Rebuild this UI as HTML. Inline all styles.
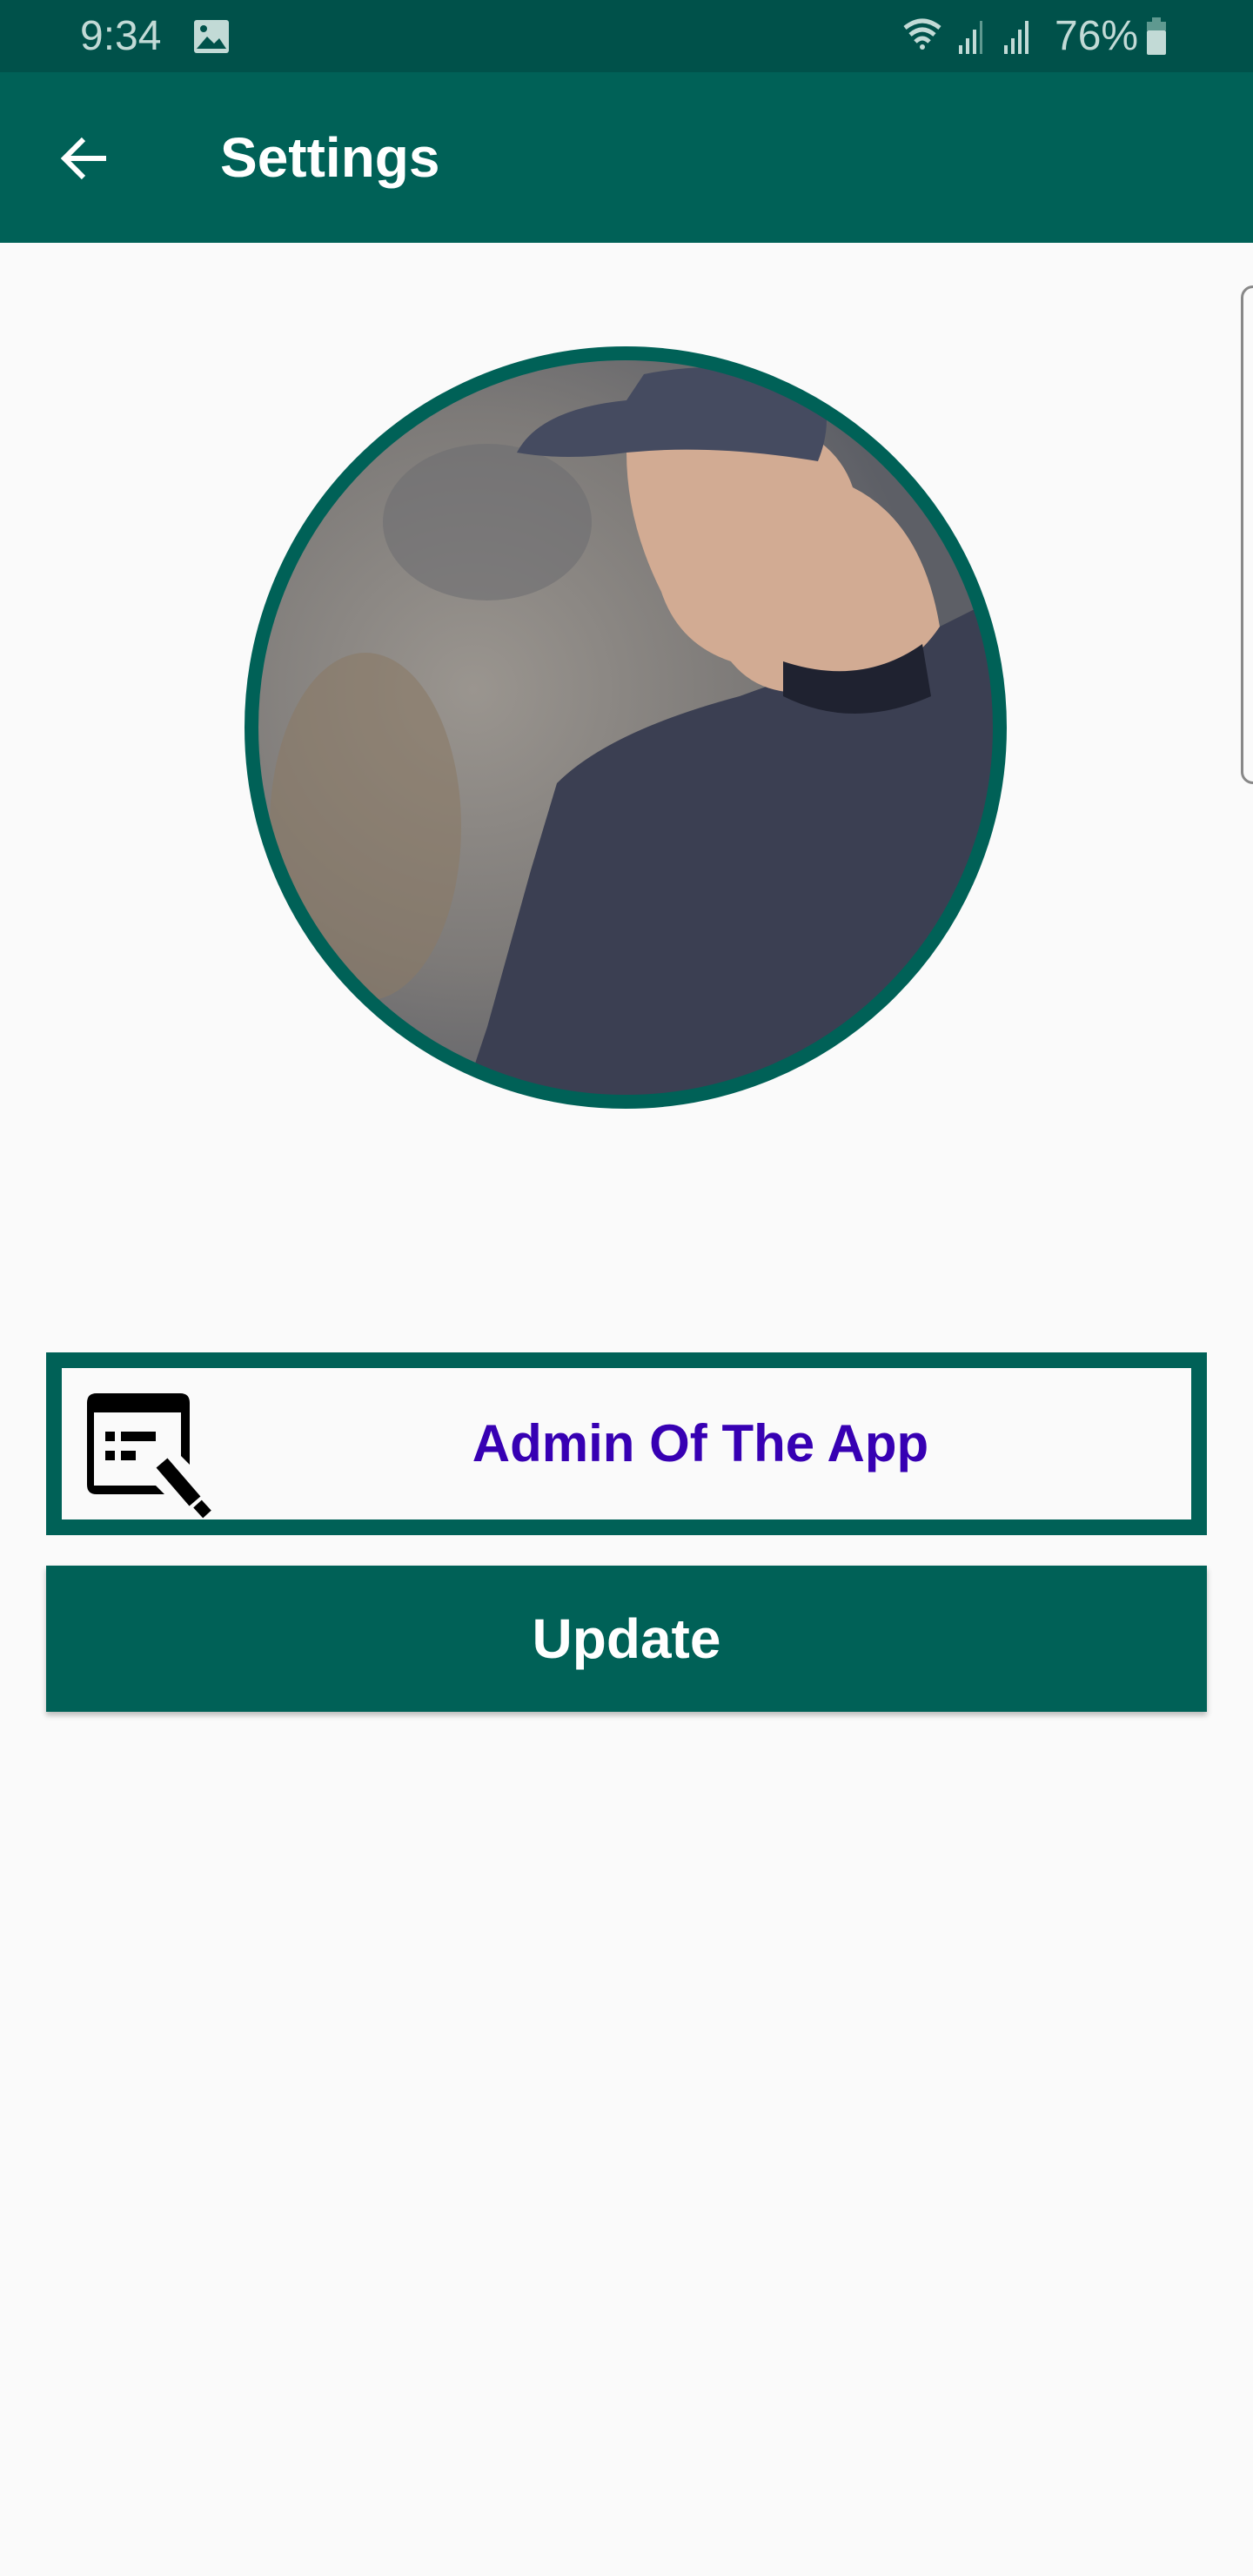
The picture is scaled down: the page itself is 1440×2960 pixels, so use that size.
<!DOCTYPE html>
<html><head><meta charset="utf-8"><style>
html,body{margin:0;padding:0}
body{width:1440px;height:2960px;background:#fafafa;position:relative;overflow:hidden;font-family:"Liberation Sans",sans-serif}
.status{position:absolute;left:0;top:0;width:1440px;height:83px;background:#00514a}
.bar{position:absolute;left:0;top:83px;width:1440px;height:196px;background:#006157}
.title{position:absolute;left:253px;top:143px;color:#fff;font-size:64px;font-weight:bold;line-height:76px}
.time{position:absolute;left:92px;top:12px;color:#c2dad6;font-size:48px;line-height:60px}
.pct{position:absolute;left:1212px;top:12px;color:#c2dad6;font-size:48px;line-height:60px}
.box{position:absolute;left:53px;top:1554px;width:1298px;height:174px;border:18px solid #006157;background:#fafafa}
.btxt{position:absolute;left:0;right:0;top:0;height:174px;line-height:174px;text-align:center;color:#3700b3;font-weight:bold;font-size:60px;padding-left:170px;box-sizing:border-box}
.upd{position:absolute;left:53px;top:1799px;width:1334px;height:168px;background:#006157;color:#fff;font-weight:bold;font-size:64px;text-align:center;line-height:168px;box-shadow:0 4px 6px rgba(0,0,0,.25)}
.edge{position:absolute;left:1426px;top:328px;width:30px;height:567px;border:3px solid #888;border-radius:14px}
</style></head><body>
<div class="status"></div>
<div class="time">9:34</div>
<svg style="position:absolute;left:222px;top:22px" width="42" height="40"><rect x="1" y="1" width="40" height="38" rx="3" fill="#c2dad6"/><circle cx="12" cy="11" r="4" fill="#00514a"/><path d="M4 34 L16 20 L24 28 L30 22 L38 34Z" fill="#00514a"/></svg>
<svg style="position:absolute;left:1036px;top:20px" width="170" height="44">
<path d="M4 12 Q24 -4 44 12" stroke="#c2dad6" stroke-width="5" fill="none"/><path d="M10 20 Q24 8 38 20" stroke="#c2dad6" stroke-width="5" fill="none"/><path d="M16 28 Q24 20 32 28" stroke="#c2dad6" stroke-width="5" fill="none"/><circle cx="24" cy="34" r="3" fill="#c2dad6"/>
<rect x="66" y="32" width="4" height="10" fill="#c2dad6"/><rect x="74" y="24" width="4" height="18" fill="#c2dad6"/><rect x="82" y="14" width="4" height="28" fill="#c2dad6"/><rect x="90" y="4" width="3" height="38" fill="#5f9990"/>
<rect x="118" y="32" width="4" height="10" fill="#c2dad6"/><rect x="126" y="24" width="4" height="18" fill="#c2dad6"/><rect x="134" y="14" width="4" height="28" fill="#c2dad6"/><rect x="142" y="4" width="4" height="38" fill="#c2dad6"/></svg>
<div class="pct">76%</div>
<svg style="position:absolute;left:1318px;top:20px" width="22" height="44"><rect x="6" y="0" width="10" height="6" fill="#5f9990"/><rect x="0" y="5" width="22" height="10" fill="#5f9990"/><rect x="0" y="15" width="22" height="28" rx="2" fill="#c2dad6"/></svg>
<div class="bar"></div>
<svg style="position:absolute;left:68px;top:154px" width="60" height="56"><path d="M54 28 H8 M28 6 L6 28 L28 50" stroke="#fff" stroke-width="6" fill="none"/></svg>
<div class="title">Settings</div>
<div class="edge"></div>
<svg style="position:absolute;left:281px;top:398px" width="876" height="876" viewBox="281 398 876 876">
<defs><clipPath id="c"><circle cx="719" cy="836" r="424"/></clipPath>
<radialGradient id="bg" cx="0.3" cy="0.45" r="0.6"><stop offset="0" stop-color="#9a958f"/><stop offset="0.6" stop-color="#7d7a78"/><stop offset="1" stop-color="#5d5f66"/></radialGradient></defs>
<g clip-path="url(#c)">
<rect x="281" y="398" width="876" height="876" fill="url(#bg)"/>
<ellipse cx="420" cy="950" rx="110" ry="200" fill="#8a7a66" opacity=".6"/>
<ellipse cx="560" cy="600" rx="120" ry="90" fill="#6e6e72" opacity=".6"/>
<path d="M850 800 Q960 760 1060 730 L1120 700 L1180 800 L1180 1300 L520 1300 L560 1180 L610 1000 L640 900 Q700 840 850 800Z" fill="#3b3f52"/>
<path d="M720 520 Q760 460 880 480 Q960 500 980 560 Q1060 600 1080 720 Q1040 780 960 790 Q880 810 840 760 Q780 740 760 680 Q720 600 720 520Z" fill="#d2ab93"/>
<path d="M900 760 Q990 790 1060 740 L1070 800 Q980 840 900 800Z" fill="#1f2230"/>
<path d="M594 520 Q620 470 720 460 L740 430 Q840 410 940 440 Q960 480 940 530 Q820 510 720 520 Q650 530 594 520Z" fill="#454b60"/>
</g>
<circle cx="719" cy="836" r="430" fill="none" stroke="#006157" stroke-width="16"/>
</svg>
<div class="box">
<svg style="position:absolute;left:23px;top:23px" width="150" height="150" viewBox="0 0 150 150">
<path d="M8 6 H113 Q124 6 124 17 V88 L114 78 V28 H14 V112 H85 L95 122 H17 Q6 122 6 111 V17 Q6 6 17 6Z" fill="#000"/>
<rect x="27" y="50" width="11" height="11" fill="#000"/><rect x="45" y="50" width="40" height="11" fill="#000"/>
<rect x="27" y="72" width="11" height="11" fill="#000"/><rect x="45" y="72" width="17" height="11" fill="#000"/>
<path d="M92 86 L130 130" stroke="#000" stroke-width="17"/><path d="M133 133 L144 145" stroke="#000" stroke-width="13"/>
</svg>
<div class="btxt">Admin Of The App</div>
</div>
<div class="upd">Update</div>
</body></html>
